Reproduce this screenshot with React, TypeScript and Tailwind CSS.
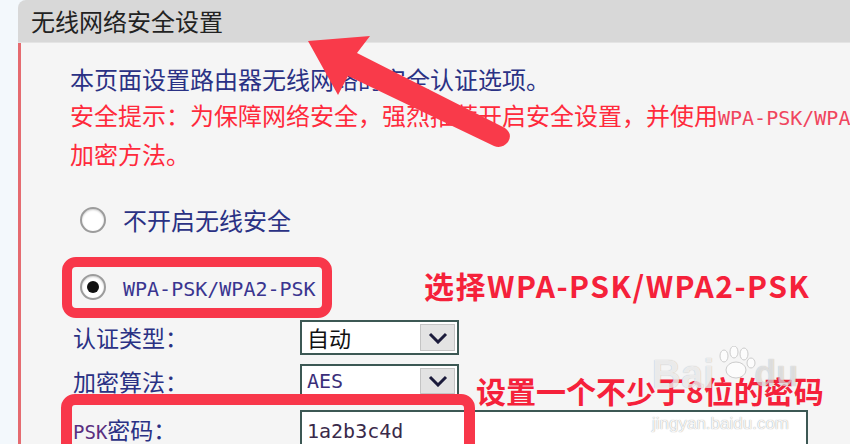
import React from 'react';

const cjk = "font-['Noto_Sans_CJK_SC',sans-serif]";
const mono = "font-['DejaVu_Sans_Mono','Liberation_Mono',monospace]";

interface SelectBoxProps {
  value: string;
  isMono?: boolean;
  height: string;
}

const SelectBox: React.FC<SelectBoxProps> = ({ value, isMono = false, height }) => (
  <div className={`w-[159px] ${height} border-2 border-[#3c5854] bg-white flex items-stretch p-[2px]`}>
    <span
      className={`flex-1 pl-[3px] flex items-center ${
        isMono ? `${mono} text-[20px] text-[#3b2f7a]` : `${cjk} text-[22px] text-[#111]`
      }`}
    >
      {value}
    </span>
    <div className="w-[35px] bg-[#e3e3e3] border border-[#c4c4c4] flex items-center justify-center">
      <svg width="20" height="12" viewBox="0 0 20 12">
        <polyline points="2,2 10,10 18,2" fill="none" stroke="#1b1b3b" strokeWidth="3" />
      </svg>
    </div>
  </div>
);

const Radio: React.FC<{ checked?: boolean }> = ({ checked = false }) => (
  <div className="w-[26px] h-[26px] rounded-full border-2 border-[#9c9c9c] bg-white flex items-center justify-center shadow-[inset_0_1px_2px_rgba(0,0,0,0.2)]">
    {checked && <div className="w-[12px] h-[12px] rounded-full bg-[#111]" />}
  </div>
);

export default function App() {
  return (
    <div className="relative w-[850px] h-[444px] overflow-hidden bg-[#f3f8fc] flex">
      <div className="ml-[18px] flex-1 flex flex-col rounded-tl-[8px] overflow-hidden">
        {/* header */}
        <div className={`h-[43px] shrink-0 bg-[#d8d8d8] pl-[13px] flex items-center ${cjk} text-[24px] text-[#222] border-b border-[#e4e4e4]`}>
          无线网络安全设置
        </div>

        {/* body */}
        <div className="flex-1 bg-[#f5f5f5] border-l-[3px] border-[#e56b70] pl-[49px] pt-[18px] whitespace-nowrap">
          <p className={`${cjk} text-[24px] leading-[36px] text-[#2a3184]`}>本页面设置路由器无线网络的安全认证选项。</p>
          <p className={`${cjk} text-[24px] leading-[36px] text-[#ff2a3c]`}>
            安全提示：为保障网络安全，强烈推荐开启安全设置，并使用
            <span className={`${mono} text-[20px] text-[#f0455e]`}>WPA-PSK/WPA2-PSK AES</span>
          </p>
          <p className={`${cjk} text-[24px] leading-[36px] text-[#ff2a3c]`}>加密方法。</p>

          <div className="mt-[30px] h-[36px] flex items-center">
            <div className="ml-[10px]">
              <Radio />
            </div>
            <span className={`ml-[17px] ${cjk} text-[24px] text-[#2a3184]`}>不开启无线安全</span>
          </div>

          <div className="mt-[33px] h-[36px] flex items-center">
            <div className="ml-[10px] -mt-[4px]">
              <Radio checked />
            </div>
            <span className={`ml-[17px] ${mono} text-[20px] text-[#3a3590]`}>WPA-PSK/WPA2-PSK</span>
          </div>

          <div className="mt-[13px] flex items-center">
            <span className={`w-[230px] pl-[3px] ${cjk} text-[23px] text-[#2a3184]`}>认证类型：</span>
            <SelectBox value="自动" height="h-[35px]" />
          </div>

          <div className="mt-[9px] flex items-center">
            <span className={`w-[230px] pl-[3px] ${cjk} text-[23px] text-[#2a3184]`}>加密算法：</span>
            <SelectBox value="AES" isMono height="h-[34px]" />
          </div>

          <div className="mt-[11px] flex items-start">
            <span className={`w-[230px] pl-[3px] pt-[2px] ${cjk} text-[23px] text-[#2a3184]`}>
              <span className={`${mono} text-[19px] text-[#5a2f80]`}>PSK</span>密码：
            </span>
            <div className={`w-[508px] h-[44px] border-2 border-[#3c5854] bg-white pl-[5px] pt-[4px] ${mono} text-[20px] text-[#3a2a4a]`}>
              1a2b3c4d
            </div>
          </div>
        </div>
      </div>

      {/* annotations */}
      <div className="absolute left-[62px] top-[257px] w-[270px] h-[61px] border-[10px] border-[#f8374a] rounded-[14px]" />
      <div className="absolute left-[61px] top-[394px] w-[414px] h-[70px] border-[11px] border-[#f8374a] rounded-[14px]" />

      <div className={`absolute left-[424px] top-[267px] ${cjk} font-bold text-[30px] tracking-[1.5px] leading-[36px] text-[#f5213a] whitespace-nowrap`}>
        选择WPA-PSK/WPA2-PSK
      </div>
      <div className={`absolute left-[476px] top-[371px] ${cjk} font-bold text-[30px] leading-[38px] text-[#f5213a] whitespace-nowrap`}>
        设置一个不少于8位的密码
      </div>

      {/* watermark */}
      <div className="absolute left-[652px] top-[346px] flex flex-col items-start pointer-events-none">
        <div className="flex items-end">
          <span className="font-['Liberation_Sans',sans-serif] font-bold text-[40px] leading-[40px] text-white/75 [text-shadow:0_0_1px_rgba(0,0,0,0.3)]">
            Bai
          </span>
          <svg width="44" height="34" viewBox="0 0 44 34" className="mb-[14px] opacity-70">
            <g fill="#ffffff" stroke="#bbbbbb" strokeWidth="1">
              <ellipse cx="10" cy="10" rx="4" ry="6" />
              <ellipse cx="20" cy="6" rx="4" ry="6" />
              <ellipse cx="30" cy="8" rx="4" ry="6" />
              <ellipse cx="37" cy="17" rx="4" ry="5" />
              <ellipse cx="22" cy="24" rx="10" ry="8" />
            </g>
          </svg>
          <span className="font-['Liberation_Sans',sans-serif] font-bold text-[36px] leading-[40px] text-white/60 [text-shadow:0_0_1px_rgba(0,0,0,0.3)] -ml-[4px]">
            du
          </span>
        </div>
        <span className="mt-[20px] font-['Liberation_Sans',sans-serif] text-[17px] leading-[20px] text-white/90 [text-shadow:0_0_1px_rgba(0,0,0,0.45)]">
          jingyan.baidu.com
        </span>
      </div>

      {/* arrow */}
      <svg className="absolute left-0 top-0 pointer-events-none" width="850" height="444" viewBox="0 0 850 444">
        <path
          d="M308,41 L370,36 L357,53 L505,128 Q513,134 508,142 Q502,149 494,146 L348,76 L338,95 Z"
          fill="#f93a4a"
        />
      </svg>
    </div>
  );
}
